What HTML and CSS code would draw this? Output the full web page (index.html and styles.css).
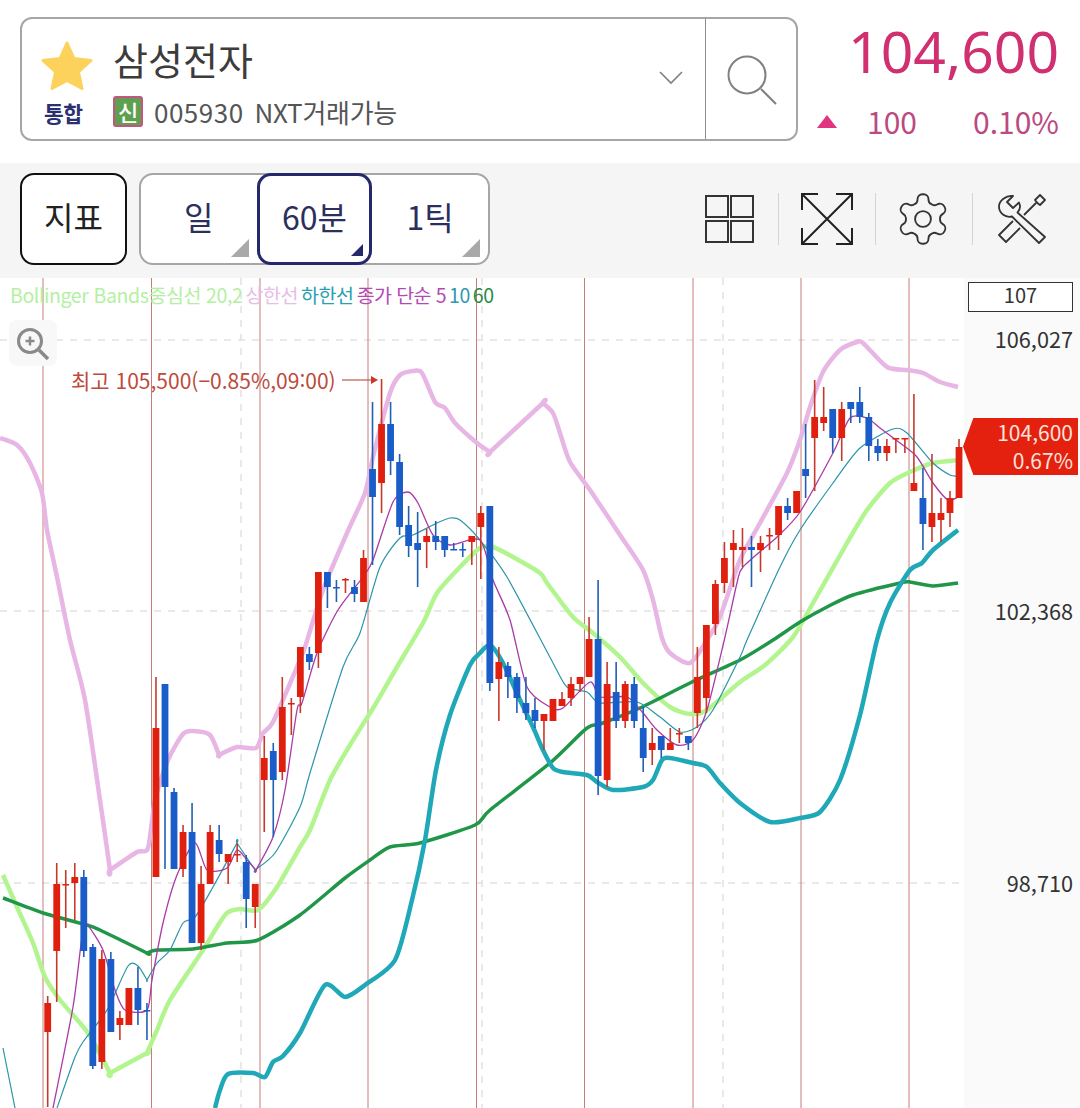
FILE: index.html
```html
<!DOCTYPE html>
<html lang="ko">
<head>
    <meta charset="UTF-8">
    <title>삼성전자 차트</title>
    <link rel="stylesheet" href="styles.css">
</head>
<body>
    <header class="stock-bar">
        <div class="stock-box">
            <div class="stock-info">
                <svg class="star" viewBox="0 0 52 50"><path d="M26 2 33 17.500 50 19.500 37.500 31 41 47.500 26 39.500 11 47.500 14.500 31 2 19.500 19 17.500Z" fill="#fdd25c" stroke="#fdd25c" stroke-width="3" stroke-linejoin="round"/></svg>
                <div class="stock-name">삼성전자</div>
                <div class="market">통합</div>
                <div class="stock-code">
                    <span class="badge">신</span>
                    <span class="code">005930</span>
                    <span>NXT거래가능</span>
                </div>
            </div>
            <svg class="chevron" viewBox="0 0 24 14"><path d="M1 1 12 12 23 1" fill="none" stroke="#808080" stroke-width="1.600"/></svg>
            <div class="search">
                <svg viewBox="0 0 52 52"><circle cx="21" cy="21" r="18.500" fill="none" stroke="#808080" stroke-width="2"/><path d="M35 35 50 50" stroke="#808080" stroke-width="2"/></svg>
            </div>
        </div>
        <div class="quote">
            <div class="price">104,600</div>
            <div class="change">
                <span class="up"></span>
                <span class="diff">100</span>
                <span class="rate">0.10%</span>
            </div>
        </div>
    </header>

    <nav class="toolbar">
        <button class="btn-indicator">지표</button>
        <div class="periods">
            <button class="period">일</button>
            <button class="period active">60분</button>
            <button class="period">1틱</button>
        </div>
        <div class="tools">
            <svg class="tool-grid" viewBox="0 0 49 48"><g fill="none" stroke="#333" stroke-width="2"><rect x="1" y="1" width="22" height="21"/><rect x="26" y="1" width="22" height="21"/><rect x="1" y="26" width="22" height="21"/><rect x="26" y="26" width="22" height="21"/></g></svg>
            <i class="sep"></i>
            <svg class="tool-expand" viewBox="0 0 52 52"><path d="M1 17V1H17M35 1H51V17M51 35V51H35M17 51H1V35M1 1 51 51M51 1 1 51" fill="none" stroke="#222" stroke-width="2"/></svg>
            <i class="sep"></i>
            <svg class="tool-gear" viewBox="1.500 1.500 21 21"><g fill="none" stroke="#333" stroke-width="0.750"><path d="M12.220 2h-.44a2 2 0 0 0-2 2v.18a2 2 0 0 1-1 1.730l-.43.25a2 2 0 0 1-2 0l-.15-.08a2 2 0 0 0-2.730.73l-.22.38a2 2 0 0 0 .73 2.730l.15.1a2 2 0 0 1 1 1.720v.51a2 2 0 0 1-1 1.740l-.15.09a2 2 0 0 0-.73 2.730l.22.38a2 2 0 0 0 2.730.73l.15-.08a2 2 0 0 1 2 0l.43.25a2 2 0 0 1 1 1.730V20a2 2 0 0 0 2 2h.44a2 2 0 0 0 2-2v-.18a2 2 0 0 1 1-1.730l.43-.25a2 2 0 0 1 2 0l.15.08a2 2 0 0 0 2.730-.73l.22-.39a2 2 0 0 0-.73-2.730l-.15-.08a2 2 0 0 1-1-1.740v-.5a2 2 0 0 1 1-1.740l.15-.09a2 2 0 0 0 .73-2.730l-.22-.38a2 2 0 0 0-2.730-.73l-.15.08a2 2 0 0 1-2 0l-.43-.25a2 2 0 0 1-1-1.730V4a2 2 0 0 0-2-2z"/><circle cx="12" cy="12" r="3.200"/></g></svg>
            <i class="sep"></i>
            <svg class="tool-wrench" viewBox="0 0 50 50"><g fill="none" stroke="#333" stroke-width="1.800" stroke-linejoin="round"><path d="M16 2 10 8 16 14 22 8.500C24 13 23 16 20.500 18.500L48 43 42 49 15 22.500C8 24 2 19 2 12.500 2 7 9 1 16 2Z"/><path d="M16 27 2 41 9 48 23 34"/><path d="M27 21 39 9M38 6 43 1 48 6 43 11 41 9.500 39.500 8Z"/></g></svg>
        </div>
    </nav>

    <main class="chart">
        <svg id="plot" class="plot" viewBox="0 278 1080 830"></svg>
        <div class="legend">
            <span class="l-mid">Bollinger Bands중심선 20,2</span>
            <span class="l-up">상한선</span>
            <span class="l-low">하한선</span>
            <span class="l-ma5">종가 단순 5</span>
            <span class="l-ma10">10</span>
            <span class="l-ma60">60</span>
        </div>
        <div class="zoom-btn">
            <svg viewBox="0 0 34 34"><circle cx="14" cy="14" r="11.500" fill="none" stroke="#8a8a8a" stroke-width="3"/><path d="M23 23 32 32" stroke="#8a8a8a" stroke-width="3.500"/><path d="M9.500 14H18.500M14 9.500V18.500" stroke="#8a8a8a" stroke-width="2.500"/></svg>
        </div>
        <div class="high-mark">최고 105,500(−0.85%,09:00)<svg viewBox="0 0 36 10"><path d="M0 5H30" stroke="#c0574a" stroke-width="1.200"/><path d="M29 1 36 5 29 9Z" fill="#c8372c"/></svg></div>
        <div class="axis-box">107</div>
        <div class="axis-label a1">106,027</div>
        <div class="axis-label a2">102,368</div>
        <div class="axis-label a3">98,710</div>
        <div class="price-tag">104,600<br>0.67%</div>
    </main>

    <script src="chart.js"></script>
</body>
</html>
```

FILE: styles.css
```css
* {
    box-sizing: border-box;
}
body {
    margin: 0;
    width: 1080px;
    height: 1108px;
    overflow: hidden;
    background: #fff;
    font-family: "Noto Sans CJK KR", "Noto Sans", sans-serif;
}
button {
    font-family: inherit;
    background: none;
    border: none;
    padding: 0;
}

/* top: stock name and price */
.stock-bar {
    display: flex;
    height: 163px;
    padding: 17px 21px 0 20px;
}
.stock-box {
    display: flex;
    align-items: center;
    width: 778px;
    height: 124px;
    border: 2px solid #a6a6a6;
    border-radius: 12px;
}
.stock-info {
    flex: 1;
    display: grid;
    grid-template-columns: 91px 1fr;
    grid-template-rows: 58px 38px;
    align-items: center;
    padding-top: 12px;
}
.star {
    width: 52px;
    height: 50px;
    margin-left: 19px;
}
.stock-name {
    margin-bottom: 14px;
    font-size: 38px;
    line-height: 44px;
    color: #3c3c3c;
}
.market {
    margin: 0 0 4px 22px;
    font-size: 21.500px;
    font-weight: 700;
    letter-spacing: -0.5px;
    color: #2b3070;
}
.stock-code {
    display: flex;
    align-items: center;
    margin-bottom: 6px;
    font-size: 26px;
    letter-spacing: -0.3px;
    color: #555;
}
.code {
    margin: 0 11px 0 11px;
    letter-spacing: 0.5px;
}
.badge {
    width: 30px;
    height: 31px;
    border: 2px solid #c4557e;
    border-radius: 3px;
    background: #5f9f50;
    color: #fff;
    font-size: 22px;
    font-weight: 500;
    line-height: 26px;
    text-align: center;
    letter-spacing: 0;
}
.chevron {
    width: 24px;
    height: 14px;
    margin: -2px 22px 0 0;
}
.search {
    display: flex;
    align-items: center;
    justify-content: center;
    width: 91px;
    height: 100%;
    padding-left: 2px;
    border-left: 1px solid #8c8c8c;
}
.search svg {
    width: 52px;
    height: 52px;
    margin-top: 2px;
}
.quote {
    flex: 1;
    text-align: right;
}
.price {
    font-family: "Noto Sans", sans-serif;
    font-size: 57px;
    line-height: 72px;
    margin-top: -2px;
    color: #d0306f;
}
.change {
    display: flex;
    align-items: center;
    margin-top: 16px;
    font-size: 30px;
    line-height: 36px;
    color: #bb4a80;
}
.up {
    width: 0;
    height: 0;
    margin-left: 19px;
    border: 10px solid transparent;
    border-top: none;
    border-bottom: 13px solid #e0347e;
}
.diff {
    margin-left: 30px;
}
.rate {
    margin-left: auto;
}

/* second row: period buttons and tools */
.toolbar {
    display: flex;
    align-items: center;
    height: 115px;
    padding: 10px 0 13px 20px;
    background: #f5f5f5;
}
.btn-indicator {
    width: 107px;
    height: 92px;
    padding-bottom: 6px;
    border: 2px solid #111;
    border-radius: 14px;
    background: #fff;
    font-size: 32px;
    color: #222;
}
.periods {
    position: relative;
    display: flex;
    width: 351px;
    height: 92px;
    margin-left: 12px;
    border: 2px solid #a6a6a6;
    border-radius: 14px;
    background: #fff;
}
.period {
    position: relative;
    width: 116px;
    padding-bottom: 6px;
    font-size: 32px;
    color: #2c2f5c;
}
.period::after {
    content: "";
    position: absolute;
    right: 8px;
    bottom: 6px;
    border-style: solid;
    border-width: 0 0 18px 18px;
    border-color: transparent transparent #a9a9a9 transparent;
}
.period.active {
    margin: -2px 0;
    border: 3px solid #25286a;
    border-radius: 14px;
    color: #2c2f5c;
}
.period.active::after {
    right: 6px;
    bottom: 6px;
    border-width: 0 0 12px 12px;
    border-bottom-color: #25286a;
}
.tools {
    display: flex;
    align-items: center;
    margin-left: 215px;
}
.tool-grid {
    width: 49px;
    height: 48px;
}
.sep {
    width: 1px;
    height: 52px;
    margin: 0 22px 0 24px;
    background: #d4d4d4;
}
.tool-expand {
    width: 52px;
    height: 52px;
    margin-right: -2px;
}
.tool-gear {
    width: 52px;
    height: 52px;
    margin: 0 -1px;
}
.tool-wrench {
    width: 50px;
    height: 50px;
    margin-left: 2px;
}

/* chart canvas, everything here lies on the plot */
.chart {
    position: relative;
    height: 830px;
    overflow: hidden;
}
.plot {
    display: block;
    width: 1080px;
    height: 830px;
}
.legend {
    position: absolute;
    left: 10px;
    top: 4px;
    display: flex;
    gap: 3px;
    font-size: 19.500px;
    line-height: 26px;
    letter-spacing: -0.4px;
    white-space: nowrap;
}
.l-mid { color: #b4f0a2; }
.l-up { color: #e8bce8; }
.l-low { color: #2aa0b0; }
.l-ma5 { color: #b449b4; letter-spacing: -0.6px; }
.l-ma10 { color: #2f97b4; }
.l-ma60 { color: #2a8a48; }
.zoom-btn {
    position: absolute;
    left: 9px;
    top: 42px;
    width: 48px;
    height: 46px;
    padding: 7px;
    border-radius: 8px;
    background: #f8f8f8;
}
.zoom-btn svg {
    display: block;
}
.high-mark {
    position: absolute;
    left: 71px;
    top: 89px;
    display: flex;
    align-items: center;
    font-size: 21px;
    line-height: 26px;
    color: #bd4a3c;
    white-space: nowrap;
}
.high-mark svg {
    width: 36px;
    height: 10px;
    margin-left: 6px;
}
.axis-box {
    position: absolute;
    left: 968px;
    top: 4px;
    width: 105px;
    height: 30px;
    border: 1px solid #333;
    background: #fff;
    color: #333;
    font-size: 20px;
    line-height: 24px;
    text-align: center;
}
.axis-label {
    position: absolute;
    right: 7px;
    font-size: 21.700px;
    line-height: 26px;
    color: #333;
}
.a1 { top: 48px; }
.a2 { top: 320px; }
.a3 { top: 592px; }
.price-tag {
    position: absolute;
    left: 963px;
    top: 140px;
    width: 115px;
    height: 57px;
    padding: 0 5px 0 0;
    background: #e4200e;
    clip-path: polygon(0 50%, 9% 0, 100% 0, 100% 100%, 9% 100%);
    color: #fbe3dc;
    font-size: 21px;
    line-height: 28px;
    text-align: right;
}
```

FILE: chart.js
```js
// candles: high, body top, body bottom, low, colour (all in page y)
const candles = [
    [996,1003,1032,1107,'r'], [863,884,951,1002,'r'], [870,884,884,928,'r'], [863,877,883,920,'r'],
    [870,877,951,957,'b'], [944,947,1066,1069,'b'], [950,959,1062,1069,'r'], [952,959,1032,1032,'b'],
    [1011,1018,1025,1040,'r'], [988,988,1025,1025,'r'], [967,988,1010,1025,'b'], [1003,1010,1010,1040,'b'],
    [677,728,877,877,'r'], [684,684,787,869,'b'], [788,792,869,869,'b'], [825,832,869,877,'r'],
    [803,832,943,943,'b'], [866,884,943,950,'r'], [825,832,884,884,'r'], [825,840,854,862,'b'],
    [854,854,862,884,'r'], [843,854,854,862,'r'], [855,862,899,928,'b'], [884,884,907,928,'r'],
    [736,758,780,832,'r'], [743,751,780,837,'b'], [677,707,772,780,'r'], [698,703,703,735,'r'],
    [647,647,697,713,'r'], [647,654,662,670,'b'], [572,572,653,668,'r'], [572,572,587,608,'b'],
    [580,587,587,602,'b'], [578,579,579,593,'r'], [580,587,594,602,'b'], [550,558,602,602,'r'],
    [402,469,497,565,'b'], [379,424,483,513,'r'], [402,424,461,475,'b'], [454,462,527,535,'b'],
    [506,525,546,557,'b'], [512,543,550,587,'b'], [529,536,542,568,'r'], [521,536,542,550,'b'],
    [536,536,550,557,'b'], [543,549,549,550,'b'], [543,549,549,557,'b'], [536,536,542,565,'r'],
    [506,513,527,579,'r'], [506,506,683,691,'b'], [647,662,679,721,'r'], [662,666,677,698,'b'],
    [673,677,698,713,'b'], [677,703,713,720,'b'], [698,710,721,728,'b'], [714,714,721,750,'r'],
    [699,699,721,721,'r'], [692,699,706,706,'r'], [677,684,698,706,'r'], [677,677,684,692,'r'],
    [617,639,677,677,'r'], [580,639,776,795,'b'], [662,684,780,787,'r'], [662,692,721,728,'b'],
    [681,684,721,728,'r'], [677,684,721,728,'b'], [707,728,758,772,'b'], [728,743,750,765,'r'],
    [736,736,750,758,'b'], [728,743,750,750,'r'], [728,733,733,743,'r'], [736,736,743,750,'b'],
    [647,677,713,728,'r'], [625,625,698,713,'r'], [580,584,624,635,'r'], [542,558,583,593,'r'],
    [530,543,550,587,'r'], [528,547,550,567,'r'], [536,547,550,587,'b'], [536,543,550,572,'r'],
    [528,535,535,550,'r'], [506,506,535,550,'r'], [498,506,513,520,'b'], [491,491,513,513,'r'],
    [424,469,476,498,'b'], [380,417,438,491,'r'], [387,417,423,431,'r'], [409,409,438,453,'b'],
    [402,409,438,461,'r'], [402,402,409,423,'b'], [387,402,417,423,'b'], [413,417,446,461,'b'],
    [439,446,453,461,'b'], [439,446,453,461,'r'], [438,438,438,453,'r'], [438,438,438,453,'r'],
    [394,483,491,491,'r'], [468,498,524,550,'b'], [454,513,527,542,'r'], [498,513,520,542,'r'],
    [491,498,513,527,'r'], [439,447,498,498,'r']
];

// a point written twice keeps a sharp corner in the curve
const lines = [
    { color: '#e7b6e4', width: 4.5, pts: '0,438 17,445 30,463 42,493 47,530 57,577 70,640 85,700 100,800 110,870 110,870 137,852 148,848 155,800 168,760 183,734 193,731 210,735 219,755 219,755 237,747 256,748 263,733 273,722 297,667 305,647 323,590 347,533 365,493 373,457 390,393 400,375 413,371 422,373 435,402 445,408 455,423 477,443 490,452 490,452 543,403 543,403 553,413 560,433 570,462 590,490 620,535 643,570 653,600 662,638 670,653 690,663 707,640 720,617 740,560 760,523 787,473 800,440 810,407 823,372 840,350 857,342 863,343 887,367 907,370 923,373 940,382 958,387' },
    { color: '#b2f58f', width: 4.5, pts: '3,875 17,907 33,943 45,977 60,1000 88,1033 110,1073 110,1073 147,1053 147,1053 157,1030 170,1000 203,950 217,927 227,913 240,909 258,910 277,887 300,847 310,830 330,780 350,745 375,705 397,667 423,623 437,593 460,567 480,548 493,547 513,557 540,573 547,583 573,617 593,633 620,657 643,683 670,707 690,714 707,710 740,682 765,665 793,637 813,603 847,543 867,510 890,483 910,472 933,463 958,460' },
    { color: '#1f9648', width: 3.5, pts: '3,898 43,913 87,925 100,930 147,953 147,953 157,950 193,949 227,943 258,940 300,915 345,878 370,860 390,847 420,843 475,825 490,810 550,763 587,728 603,723 640,708 690,683 740,660 773,640 800,622 827,607 853,595 900,583 910,582 933,586 958,583' },
    { color: '#1fa8b8', width: 4.5, pts: '215,1108 220,1090 228,1074 253,1073 265,1077 273,1062 283,1056 300,1033 325,985 345,997 365,985 395,960 412,900 425,840 436,770 450,715 470,665 480,653 490,645 503,663 520,700 533,727 543,750 553,768 563,772 587,775 597,782 613,790 643,787 653,780 662,760 670,758 693,763 707,767 720,783 740,803 770,822 800,818 820,812 840,780 860,715 877,640 890,603 910,570 922,563 933,550 958,530' },
    { color: '#2a95a8', width: 1.2, pts: '3,1048 15,1108' },
    { color: '#2a95a8', width: 1.2, pts: '57,1108 75,1057 83,1042 107,1010 128,966 138,966 147,980 147,980 157,963 170,950 183,923 195,917 213,887 237,843 237,843 255,870 255,870 275,853 300,807 310,773 343,667 360,633 380,567 400,538 413,535 437,523 450,518 460,520 480,540 507,577 553,663 567,687 587,692 600,703 637,702 660,717 680,732 697,727 713,710 740,657 747,640 780,567 800,530 833,483 860,448 893,429 907,433 933,463 950,475 958,476' },
    { color: '#a93aa8', width: 1.3, pts: '53,1108 73,1007 82,937 87,925 103,950 115,990 125,1010 147,1010 152,980 163,923 177,875 195,843 207,870 227,868 237,850 247,860 256,870 256,870 273,837 285,790 297,710 302,703 317,653 338,610 363,577 373,560 393,502 408,492 418,503 433,535 450,545 480,540 493,580 510,620 527,687 550,707 563,708 590,682 600,697 627,697 643,713 657,730 677,745 693,740 707,710 725,637 737,583 743,567 777,537 800,512 833,453 850,418 867,418 880,428 900,443 917,457 933,483 948,500 958,497' }
];

const NS = 'http://www.w3.org/2000/svg';
const plot = document.getElementById('plot');

function add(tag, attrs) {
    const el = document.createElementNS(NS, tag);
    for (const key in attrs) el.setAttribute(key, attrs[key]);
    plot.appendChild(el);
}

// soft curve through the points (catmull-rom, low tension)
function curve(str) {
    const p = str.split(' ').map(s => s.split(',').map(Number));
    let d = 'M' + p[0].join(' ');
    for (let i = 0; i < p.length - 1; i++) {
        const a = p[i - 1] || p[i], b = p[i], c = p[i + 1], e = p[i + 2] || c;
        const c1 = [b[0] + (c[0] - a[0]) / 8, b[1] + (c[1] - a[1]) / 8];
        const c2 = [c[0] - (e[0] - b[0]) / 8, c[1] - (e[1] - b[1]) / 8];
        d += `C${c1[0]} ${c1[1]} ${c2[0]} ${c2[1]} ${c[0]} ${c[1]}`;
    }
    return d;
}

add('rect', { x: 964, y: 278, width: 116, height: 830, fill: '#fafafa' });

// dashed grid
[241, 482, 723].forEach(x => add('line', { x1: x, x2: x, y1: 278, y2: 1108, stroke: '#e2e2e2', 'stroke-width': 1.5, 'stroke-dasharray': '7 7' }));
[340, 611, 883].forEach(y => add('line', { x1: 0, x2: 964, y1: y, y2: y, stroke: '#e2e2e2', 'stroke-width': 1.5, 'stroke-dasharray': '7 7' }));

// session lines
[43, 151.5, 260, 368, 476.5, 584.5, 693, 801, 909].forEach(x => add('line', { x1: x, x2: x, y1: 278, y2: 1108, stroke: '#c77d78', 'stroke-width': 1 }));

lines.forEach(l => add('path', { d: curve(l.pts), fill: 'none', stroke: l.color, 'stroke-width': l.width, 'stroke-linejoin': 'round' }));

candles.forEach((c, i) => {
    const x = 47.7 + i * 9.023;
    const fill = c[4] === 'r' ? '#e0200f' : '#1a5cc8';
    const wick = c[4] === 'r' ? '#c8382a' : '#1f5fb4';
    add('line', { x1: x, x2: x, y1: c[0], y2: c[3], stroke: wick, 'stroke-width': 1.6 });
    add('rect', { x: x - 3.4, y: c[1], width: 6.8, height: Math.max(c[2] - c[1], 1.5), fill });
});
```
